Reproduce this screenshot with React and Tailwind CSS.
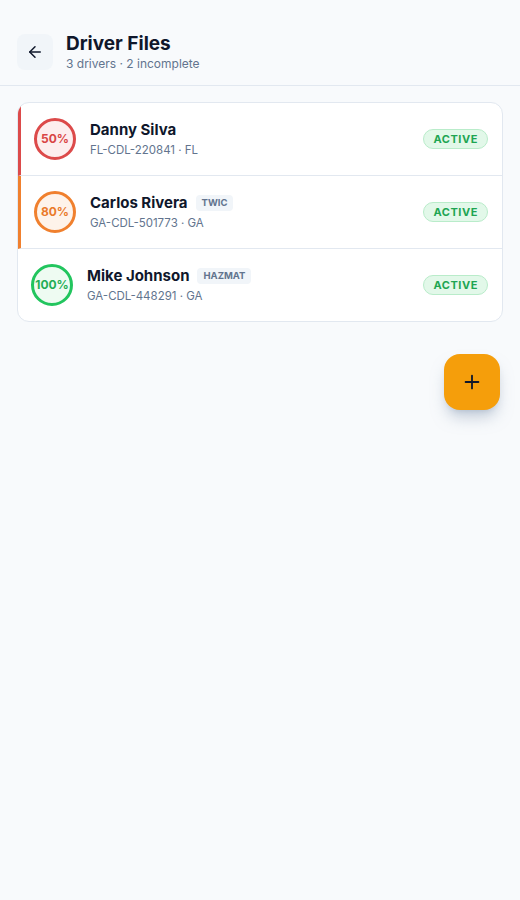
import React from 'react';
import { ArrowLeft, Plus } from 'lucide-react';

const drivers = [
  {
    name: 'Danny Silva',
    cdl: 'FL-CDL-220841 · FL',
    pct: 50,
    tag: null,
    accent: 'border-l-[3px] border-l-[#dc4a4a]',
    ring: 'border-[#dc4a4a] bg-[#fdeeee] text-[#d94545]',
  },
  {
    name: 'Carlos Rivera',
    cdl: 'GA-CDL-501773 · GA',
    pct: 80,
    tag: 'TWIC',
    accent: 'border-l-[3px] border-l-[#f0802e]',
    ring: 'border-[#f0802e] bg-[#fef3ea] text-[#ea7a2a]',
  },
  {
    name: 'Mike Johnson',
    cdl: 'GA-CDL-448291 · GA',
    pct: 100,
    tag: 'HAZMAT',
    accent: '',
    ring: 'border-[#22c55e] bg-[#eefbf2] text-[#1fae55]',
  },
];

function DriverRow({ d, last }) {
  return (
    <div className={`flex items-center gap-3.5 pl-[13px] pr-[14px] py-[15px] ${d.accent} ${last ? '' : 'border-b border-b-slate-200'}`}>
      <div className={`w-[42px] h-[42px] shrink-0 rounded-full border-[3px] flex items-center justify-center text-[12px] font-bold ${d.ring}`}>
        {d.pct}%
      </div>
      <div className="flex-1 min-w-0">
        <div className="flex items-center gap-2 h-5">
          <span className="text-[15px] font-bold text-slate-900 leading-5">{d.name}</span>
          {d.tag && (
            <span className="px-1.5 py-[1px] rounded bg-slate-100 text-slate-500 text-[9.5px] font-bold leading-[14px]">
              {d.tag}
            </span>
          )}
        </div>
        <div className="text-[11.5px] text-slate-500 leading-4 mt-0.5">{d.cdl}</div>
      </div>
      <span className="px-[9px] h-5 flex items-center rounded-full border border-[#b9ecca] bg-[#e2f8e9] text-[#1ea552] text-[11px] font-bold tracking-wider">
        ACTIVE
      </span>
    </div>
  );
}

export default function App() {
  return (
    <div className="min-h-screen bg-slate-50 font-['Inter','Noto_Sans',sans-serif]">
      {/* Header */}
      <header className="flex items-center gap-[13px] px-[17px] pt-[32px] pb-[13px] border-b border-slate-200">
        <button className="w-9 h-9 rounded-lg bg-slate-100 flex items-center justify-center text-slate-900">
          <ArrowLeft size={18} strokeWidth={2} />
        </button>
        <div>
          <h1 className="text-[19px] font-bold text-slate-900 leading-6">Driver Files</h1>
          <p className="text-[12px] text-slate-500 leading-4">3 drivers · 2 incomplete</p>
        </div>
      </header>

      <main className="px-[17px] pt-[16px]">
        <div className="bg-white border border-slate-200 rounded-xl overflow-hidden">
          {drivers.map((d, i) => (
            <DriverRow key={d.name} d={d} last={i === drivers.length - 1} />
          ))}
        </div>

        <div className="flex justify-end mt-[32px] pr-[3px]">
          <button className="w-14 h-14 rounded-2xl bg-[#f59e0b] flex items-center justify-center text-slate-900 shadow-lg shadow-slate-400/50">
            <Plus size={22} strokeWidth={2} />
          </button>
        </div>
      </main>
    </div>
  );
}
